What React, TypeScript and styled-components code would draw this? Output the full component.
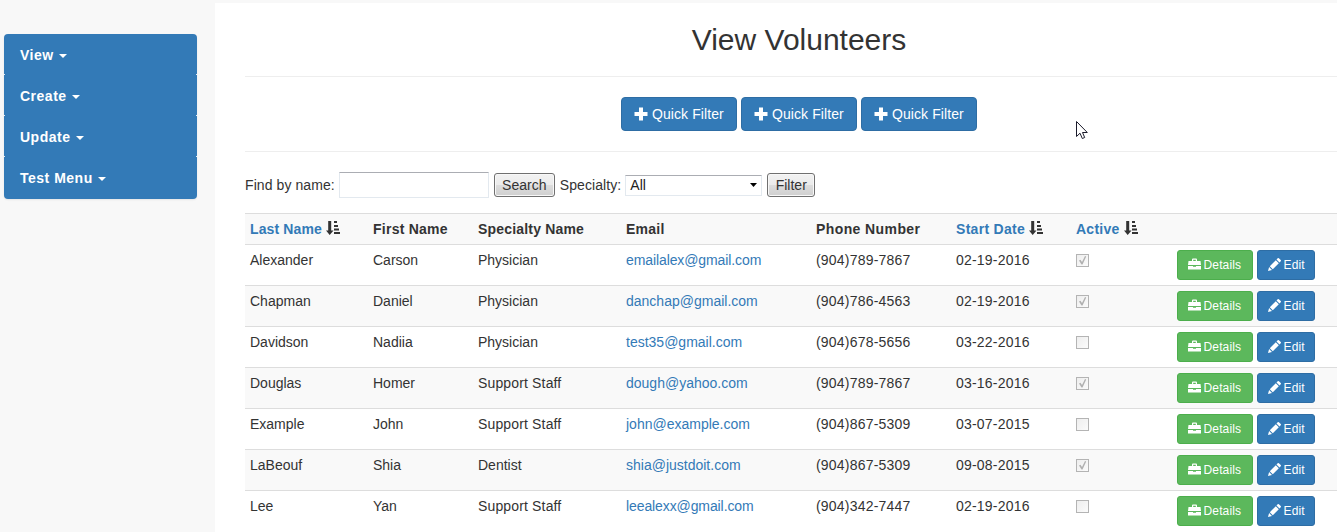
import React from "react";
import styled, { createGlobalStyle } from "styled-components";

const GlobalStyle = createGlobalStyle`
  *, *::before, *::after { box-sizing: border-box; }
  html, body { margin: 0; height: 100%; overflow: hidden; }
  body {
    background: #f8f8f8;
    color: #333;
    font: 14px/20px "Liberation Sans", Arial, sans-serif;
  }
`;

const Page = styled.div`
  display: flex;
  height: 532px;
  overflow: hidden;
`;

const Sidebar = styled.aside`
  flex: none;
  width: 215px;
  padding: 34px 18px 0 4px;
`;

const Menu = styled.nav`
  height: 165px;
  overflow: hidden;
  border-radius: 4px;
  background: #337ab7;
  box-shadow: 0 1px 2px rgba(0, 0, 0, 0.08);
`;

const MenuItem = styled.a`
  display: flex;
  align-items: center;
  height: 41px;
  padding: 1px 16px 0;
  color: #fff;
  font-weight: bold;
  letter-spacing: 0.5px;

  &:not(:last-child) {
    background:
      linear-gradient(#e4edf5, #e4edf5) left bottom / 1px 1px no-repeat,
      linear-gradient(#e4edf5, #e4edf5) right bottom / 1px 1px no-repeat;
  }
`;

const Caret = styled.span`
  margin: 1px 0 0 5.5px;
  border: 4px solid transparent;
  border-top-color: currentColor;
  border-bottom: 0;
`;

const Main = styled.main`
  flex: none;
  width: 1138px;
  margin-top: 3px;
  padding: 0 0 0 30px;
  background: #fff;
`;

const Title = styled.h2`
  margin: 0;
  padding-top: 20px;
  height: 73px;
  font-size: 30px;
  line-height: 33px;
  font-weight: normal;
  text-align: center;
`;

const QuickBar = styled.div`
  display: flex;
  justify-content: center;
  gap: 4px;
  padding: 20px 0;
  border: solid #eee;
  border-width: 1px 0;
`;

const Button = styled.button<{ $tone?: "green"; $small?: boolean }>`
  display: flex;
  align-items: center;
  justify-content: flex-start;
  gap: ${(p) => (p.$small ? 2.5 : 4)}px;
  width: ${(p) => (p.$small ? (p.$tone ? 76 : 58) : 116)}px;
  height: ${(p) => (p.$small ? 30 : 34)}px;
  padding: 0 0 0 ${(p) => (p.$small ? 10 : 12)}px;
  border: 1px solid ${(p) => (p.$tone ? "#4cae4c" : "#2e6da4")};
  border-radius: ${(p) => (p.$small ? 3 : 4)}px;
  background: ${(p) => (p.$tone ? "#5cb85c" : "#337ab7")};
  color: #fff;
  font: ${(p) => (p.$small ? 12 : 14)}px/20px "Liberation Sans", Arial, sans-serif;
  letter-spacing: ${(p) => (p.$small ? 0.15 : 0.08)}px;
  white-space: nowrap;
`;

const Filters = styled.form`
  display: flex;
  align-items: center;
  height: 61px;
  padding-top: 5px;
  letter-spacing: 0.08px;
`;

const NameInput = styled.input`
  width: 150px;
  height: 26px;
  margin: 0 5px 0 4px;
  border: 1px solid #e3e9ef;
  border-top-color: #abadb3;
`;

const NativeButton = styled.button<{ $width: number }>`
  width: ${(p) => p.$width}px;
  height: 24px;
  padding: 0;
  border: 1px solid #707070;
  border-radius: 3px;
  box-shadow: inset 0 0 0 1px #f8f8f8;
  background: linear-gradient(#f2f2f2 0, #ebebeb 50%, #ddd 50%, #cfcfcf);
  color: #333;
  font: inherit;
`;

const SelectBox = styled.div`
  display: flex;
  align-items: center;
  justify-content: space-between;
  width: 137px;
  height: 21px;
  margin: 0 5px 0 4px;
  padding: 0 4px;
  border: 1px solid #e3e9ef;
  border-top-color: #abadb3;
  color: #222;
`;

const SpecialtyLabel = styled.label`
  margin-left: 5px;
`;

const Row = styled.div<{ $head?: boolean; $striped?: boolean }>`
  display: grid;
  grid-template-columns: 123px 105px 148px 190px 140px 120px 101px 1fr;
  height: ${(p) => (p.$head ? 31 : 41)}px;
  border-top: 1px solid #ddd;
  background: ${(p) => (p.$striped ? "#f9f9f9" : "#fff")};
  font-weight: ${(p) => (p.$head ? "bold" : "normal")};
  letter-spacing: ${(p) => (p.$head ? "0.25px" : "normal")};
`;

const Cell = styled.div<{ $link?: boolean; $spacing?: number }>`
  display: flex;
  align-items: flex-start;
  gap: 4px;
  padding: 5px 5px 0;
  white-space: nowrap;
  color: ${(p) => (p.$link ? "#337ab7" : "inherit")};
  letter-spacing: ${(p) => (p.$spacing === undefined ? "inherit" : `${p.$spacing}px`)};
`;

const Check = styled.span`
  display: flex;
  width: 13px;
  height: 13px;
  margin-top: 4px;
  border: 1px solid #b4b4b4;
  background: linear-gradient(135deg, #eee, #fbfbfb);
`;

const Glyph = styled.svg<{ $color?: string; $top?: number }>`
  flex: none;
  display: block;
  margin-top: ${(p) => p.$top ?? 0}px;
  fill: ${(p) => p.$color ?? "currentColor"};
`;

const Cursor = styled.svg`
  position: absolute;
  left: 1076px;
  top: 120px;
`;

const PlusIcon = () => (
  <Glyph width="14" height="14" viewBox="0 0 14 14" $top={-1}>
    <path d="M5 .5h4V5h4.500v4H9v4.500H5V9H.5V5H5z" />
  </Glyph>
);

const SortIcon = () => (
  <Glyph width="14" height="14" viewBox="0 0 14 14" $color="#333" $top={2}>
    <path d="M2.200 0h3v9.500h2.300L3.700 14 0 9.500h2.200zM8 0h3v2H8zM8 4h4v2H8zM8 7.500h5v2H8zM8 11h6v2H8z" />
  </Glyph>
);

const CaseIcon = () => (
  <Glyph width="13" height="12" viewBox="0 0 13 12" $top={-3}>
    <path d="M4 3V1.500Q4 .5 5 .5h3Q9 .5 9 1.500V3h3.500L13 7H0l.5-4zM5.200 3h2.600V1.700H5.200zM0 8h5v.7h3V8h5v3.500H0z" />
  </Glyph>
);

const PencilIcon = () => (
  <Glyph width="13" height="13" viewBox="0 0 13 13" $top={-2}>
    <path d="M0 13l1.100-4 2.900 2.900zM1.800 8.200l6-6 3 3-6 6zM8.500 1.500L9.700.3q.6-.6 1.200 0l1.800 1.800q.6.6 0 1.200l-1.200 1.200z" />
  </Glyph>
);

const volunteers = [
  ["Alexander", "Carson", "Physician", "emailalex@gmail.com", "(904)789-7867", "02-19-2016", true],
  ["Chapman", "Daniel", "Physician", "danchap@gmail.com", "(904)786-4563", "02-19-2016", true],
  ["Davidson", "Nadiia", "Physician", "test35@gmail.com", "(904)678-5656", "03-22-2016", false],
  ["Douglas", "Homer", "Support Staff", "dough@yahoo.com", "(904)789-7867", "03-16-2016", true],
  ["Example", "John", "Support Staff", "john@example.com", "(904)867-5309", "03-07-2015", false],
  ["LaBeouf", "Shia", "Dentist", "shia@justdoit.com", "(904)867-5309", "09-08-2015", true],
  ["Lee", "Yan", "Support Staff", "leealexx@gmail.com", "(904)342-7447", "02-19-2016", false],
] as const;

const headings: { label: string; sortable?: boolean; spacing?: number }[] = [
  { label: "Last Name", sortable: true, spacing: 0.12 },
  { label: "First Name" },
  { label: "Specialty Name", spacing: 0.18 },
  { label: "Email" },
  { label: "Phone Number", spacing: 0.4 },
  { label: "Start Date", sortable: true, spacing: 0.3 },
  { label: "Active", sortable: true },
];

export default function App() {
  return (
    <Page>
      <GlobalStyle />
      <Sidebar>
        <Menu>
          {["View", "Create", "Update", "Test Menu"].map((label) => (
            <MenuItem key={label}>
              {label}
              <Caret />
            </MenuItem>
          ))}
        </Menu>
      </Sidebar>
      <Main>
        <Title>View Volunteers</Title>
        <QuickBar>
          {[1, 2, 3].map((n) => (
            <Button key={n}>
              <PlusIcon />
              Quick Filter
            </Button>
          ))}
        </QuickBar>
        <Filters>
          <label>Find by name:</label>
          <NameInput />
          <NativeButton type="button" $width={61}>Search</NativeButton>
          <SpecialtyLabel>Specialty:</SpecialtyLabel>
          <SelectBox>
            All
            <Glyph width="7" height="4" viewBox="0 0 7 4" $color="#000">
              <path d="M0 0h7L3.500 4z" />
            </Glyph>
          </SelectBox>
          <NativeButton type="button" $width={48}>Filter</NativeButton>
        </Filters>
        <Row $head $striped>
          {headings.map(({ label, sortable, spacing }) => (
            <Cell key={label} $link={sortable} $spacing={spacing}>
              {label}
              {sortable && <SortIcon />}
            </Cell>
          ))}
        </Row>
        {volunteers.map(([last, first, specialty, email, phone, start, active], i) => (
          <Row key={last} $striped={i % 2 === 1}>
            <Cell>{last}</Cell>
            <Cell>{first}</Cell>
            <Cell $spacing={specialty === "Support Staff" ? 0.15 : 0}>{specialty}</Cell>
            <Cell $link $spacing={email.includes("alex") ? -0.1 : 0}>{email}</Cell>
            <Cell $spacing={0.2}>{phone}</Cell>
            <Cell $spacing={0.2}>{start}</Cell>
            <Cell>
              <Check>
                {active && (
                  <Glyph width="11" height="11" viewBox="0 0 11 11" $color="#b0b0b0">
                    <path d="M2 5.500l1.500-.8L5 7l3-6 1.200.5L5.500 9.500h-1z" />
                  </Glyph>
                )}
              </Check>
            </Cell>
            <Cell>
              <Button $small $tone="green">
                <CaseIcon />
                Details
              </Button>
              <Button $small>
                <PencilIcon />
                Edit
              </Button>
            </Cell>
          </Row>
        ))}
      </Main>
      <Cursor width="12" height="20" viewBox="0 0 12 20">
        <path d="M.5 1.500v15l3.500-3.300 2.300 5.300 2.400-1-2.200-5h4.800z" fill="#fff" stroke="#1b1b2b" />
      </Cursor>
    </Page>
  );
}
